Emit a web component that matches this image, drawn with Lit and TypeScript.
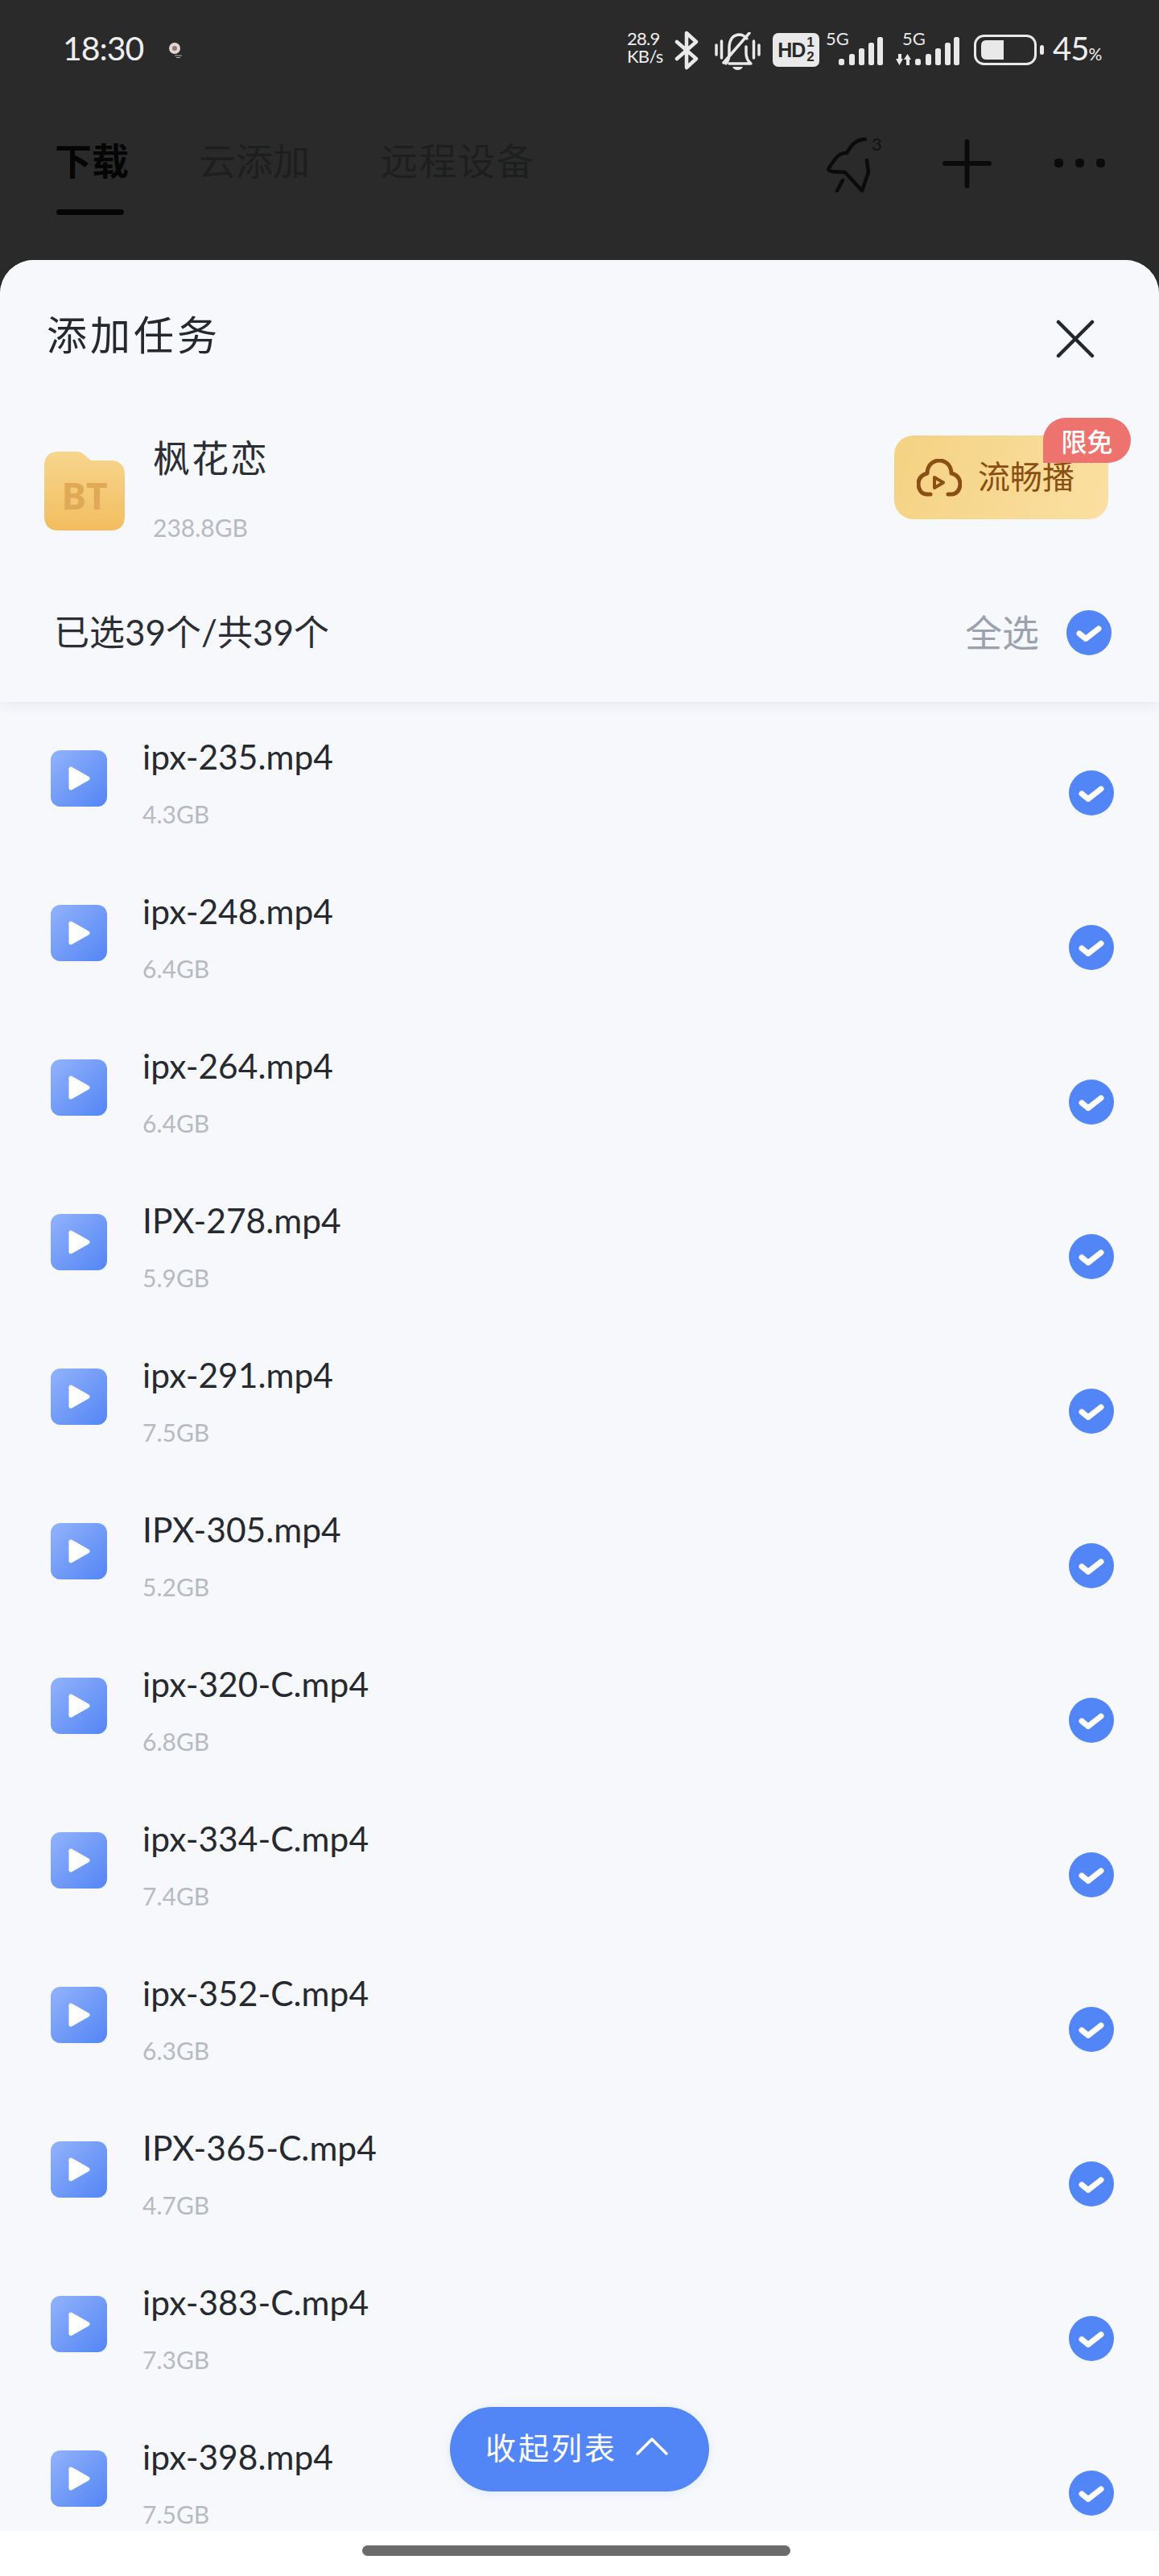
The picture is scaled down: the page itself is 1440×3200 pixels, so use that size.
import { LitElement, html, css, svg } from "lit";
import { customElement } from "lit/decorators.js";

const FILES: [string, string][] = [
  ["ipx-235.mp4", "4.3GB"],
  ["ipx-248.mp4", "6.4GB"],
  ["ipx-264.mp4", "6.4GB"],
  ["IPX-278.mp4", "5.9GB"],
  ["ipx-291.mp4", "7.5GB"],
  ["IPX-305.mp4", "5.2GB"],
  ["ipx-320-C.mp4", "6.8GB"],
  ["ipx-334-C.mp4", "7.4GB"],
  ["ipx-352-C.mp4", "6.3GB"],
  ["IPX-365-C.mp4", "4.7GB"],
  ["ipx-383-C.mp4", "7.3GB"],
  ["ipx-398.mp4", "7.5GB"],
];

const check = html`<svg class="check" viewBox="0 0 56 56" width="56" height="56">
  <circle cx="28" cy="28" r="28" fill="#5285f5"></circle>
  <path d="M16 29 L24 35.5 L40 23" fill="none" stroke="#fff" stroke-width="7" stroke-linecap="round" stroke-linejoin="round"></path>
</svg>`;

const bars = (xs: number[]) =>
  xs.map((x, i) => {
    const top = [33, 27, 20, 13, 6][i];
    return svg`<rect x=${x} y=${top} width="7" height=${41 - top} rx="2.5" fill="#e9e9e9"></rect>`;
  });

@customElement("app-root")
export class AppRoot extends LitElement {
  static styles = css`
    :host {
      display: block;
      width: 1440px;
      height: 3200px;
      background: #fff;
      overflow: hidden;
      font-family: "Lato", "Noto Sans CJK SC", sans-serif;
    }
    .top { height: 373px; margin-bottom: -50px; background: #2a2a2a; display: flex; flex-direction: column; }
    .status { height: 170px; display: flex; align-items: flex-start; padding: 0 76px 0 78px; box-sizing: border-box; color: #eee; flex: none; }
    .time { font-size: 41px; line-height: 40px; margin-top: 40px; width: 95px; letter-spacing: -1px; white-space: nowrap; }
    .flower { margin: 53px 0 0 36px; }
    .speed { margin: 37px 0 0 auto; font-size: 22px; line-height: 22px; width: 46px; white-space: nowrap; letter-spacing: -0.7px; }
    .bt { margin: 38px 0 0 13px; }
    .mute { margin: 40px 0 0 20px; }
    .hd { margin: 41px 0 0 15px; width: 58px; height: 42px; border-radius: 7px; background: #e9e9e9; color: #2a2a2a; display: flex; align-items: center; justify-content: center; font-family: "Liberation Sans", sans-serif; font-weight: 700; font-size: 25px; letter-spacing: -1px; }
    .frac { display: flex; flex-direction: column; font-size: 17px; line-height: 18px; margin-left: 2px; letter-spacing: 0; }
    .sig1 { margin: 34px 0 0 8px; }
    .sig2 { margin: 34px 0 0 16px; }
    .sigtext { font-size: 22px; fill: #e9e9e9; font-family: "Lato", sans-serif; }
    .bat { margin: 43px 0 0 18px; }
    .pct { margin: 40px 0 0 10px; font-size: 40px; line-height: 40px; white-space: nowrap; width: 56px; letter-spacing: -1px; }
    .pct small { font-size: 21px; letter-spacing: -1px; }

    .tabbar { display: flex; align-items: flex-start; flex: 1; }
    .tab { font-size: 46px; line-height: 60px; color: #1d1e1e; white-space: nowrap; }
    .tab.on { margin-left: 68px; color: #050505; font-weight: 700; display: flex; flex-direction: column; }
    .tab.on i { display: block; width: 84px; height: 7px; border-radius: 4px; background: #050505; margin: 30px 0 0 2px; }
    .tab.two { margin-left: 87px; }
    .tab.three { margin-left: 88px; letter-spacing: 2px; }
    .alert { margin: -6px 0 0 auto; }
    .plus { margin: 3px 0 0 76px; }
    .dots { margin: 27px 67px 0 78px; }

    .sheet { height: 2821px; background: #f6f8fc; border-radius: 42px 42px 0 0; position: relative; overflow: hidden; display: flex; flex-direction: column; }
    .head { flex: none; height: 549px; position: relative; z-index: 1; background: #f6f8fc; box-shadow: 0 5px 14px rgba(40, 50, 70, 0.07); display: flex; flex-direction: column; }
    .titlerow { height: 186px; display: flex; align-items: center; padding: 0 80px 0 58px; flex: none; }
    .title { font-size: 50px; line-height: 60px; letter-spacing: 4px; color: #25282d; }
    .close { margin: 10px 0 0 auto; }
    .folderrow { height: 191px; display: flex; align-items: flex-start; flex: none; }
    .folder { width: 100px; height: 98px; margin: 52px 0 0 55px; background: linear-gradient(180deg, #f7d68e, #f3bd5f); clip-path: path("M0 18 Q0 0 18 0 H40 Q46 0 50 4 L58 11 H82 Q100 11 100 29 V80 Q100 98 82 98 H18 Q0 98 0 80 Z"); display: flex; align-items: center; justify-content: center; padding-top: 10px; box-sizing: border-box; color: #dfa956; font: 700 46px "Noto Sans", sans-serif; }
    .ftext { margin: 30px 0 0 35px; display: flex; flex-direction: column; }
    .fname { font-size: 46px; line-height: 60px; color: #2b2e33; letter-spacing: 2px; }
    .fsize { font-size: 30px; line-height: 40px; margin-top: 36px; color: #b7bac2; }
    .stream { margin: 32px 63px 0 auto; width: 266px; height: 104px; border-radius: 24px; background: linear-gradient(110deg, #f4d283, #fbe0a2); display: flex; align-items: center; padding-left: 28px; box-sizing: border-box; position: relative; color: #8b4f14; font-size: 40px; gap: 20px; }
    .stream span { margin-bottom: 6px; }
    .badge { position: absolute; top: -22px; right: -28px; width: 109px; height: 56px; background: #ee726e; border-radius: 28px 28px 28px 0; color: #fff; font-size: 32px; font-weight: 500; display: flex; align-items: center; justify-content: center; }
    .selrow { flex: 1; display: flex; align-items: center; padding: 0 59px 0 67px; }
    .seltext { font-size: 44px; color: #2b2e33; margin-bottom: 6px; }
    .selall { margin: 0 34px 6px auto; font-size: 46px; color: #9aa3ad; }

    .list { flex: 1; overflow: hidden; padding-top: 20px; }
    .row { height: 192px; display: flex; align-items: flex-start; padding: 0 56px 0 63px; box-sizing: border-box; }
    .play { width: 70px; height: 70px; margin-top: 40px; flex: none; border-radius: 12px; background: linear-gradient(135deg, #93b3fb, #5285f5); display: flex; align-items: center; justify-content: center; }
    .ftxt { margin: 23px 0 0 44px; display: flex; flex-direction: column; }
    .name { font-size: 42.5px; line-height: 50px; color: #26292e; white-space: nowrap; }
    .size { font-size: 30px; line-height: 40px; margin-top: 26px; color: #b7bac2; }
    .row .check { margin: 65px 0 0 auto; }

    .fold { position: absolute; left: 559px; bottom: 49px; width: 322px; height: 105px; border-radius: 53px; background: #5285f5; box-shadow: 0 2px 12px rgba(82, 133, 245, 0.12); color: #fff; display: flex; align-items: center; padding: 0 0 8px 44px; box-sizing: border-box; gap: 23px; font-size: 38px; letter-spacing: 3px; white-space: nowrap; }
    .homebar { height: 56px; display: flex; justify-content: center; padding: 18px 8px 0 0; box-sizing: border-box; }
    .homebar i { display: block; width: 532px; height: 13px; border-radius: 7px; background: #6b6b6b; }
  `;

  render() {
    return html`
      <div class="top">
        <div class="status">
          <span class="time">18:30</span>
          <svg class="flower" width="18" height="19" viewBox="0 0 18 19">
            <circle cx="8" cy="7" r="7" fill="#e6d5d0"></circle>
            <circle cx="8" cy="7" r="3" fill="#8a7a78"></circle>
            <path d="M8 16 H17 M10 18.5 H15" stroke="#b9aaa6" stroke-width="1.2"></path>
          </svg>
          <div class="speed">28.9<br />KB/s</div>
          <svg class="bt" width="30" height="49" viewBox="0 0 30 49" fill="none" stroke="#e9e9e9" stroke-width="4.5" stroke-linejoin="round" stroke-linecap="round">
            <path d="M3 14 L27 35 L15 46 V3 L27 14 L3 35"></path>
          </svg>
          <svg class="mute" width="57" height="48" viewBox="0 0 57 48" fill="none" stroke="#e9e9e9" stroke-width="3.5" stroke-linecap="round" stroke-linejoin="round">
            <path d="M2 16 V28 M8.5 11 V32 M48.5 11 V32 M55 16 V28"></path>
            <path d="M14 39 Q18 34 18 26 V18 Q19 4 30 3 Q36 3 40 8"></path>
            <path d="M39 18 V26 Q39 34 45 39 H18"></path>
            <path d="M11 38 L43 1"></path>
            <path d="M22 43 H35 Q33 47 28.500 47 Q24 47 22 43 Z" fill="#e9e9e9" stroke="none"></path>
          </svg>
          <div class="hd">HD<span class="frac"><span>1</span><span>2</span></span></div>
          <svg class="sig1" width="71" height="47" viewBox="0 -6 71 47">
            <text class="sigtext" x="0" y="16">5G</text>
            ${bars([16, 29, 41, 53, 64])}
          </svg>
          <svg class="sig2" width="79" height="47" viewBox="0 -6 79 47">
            <text class="sigtext" x="8" y="16">5G</text>
            <path d="M0 33 H3 V27 H7 V33 H9 L4.500 41 Z M10 34 L14.500 27 L19 34 H17 V41 H13 V34 Z" fill="#e9e9e9"></path>
            ${bars([24, 37, 49, 61, 72])}
          </svg>
          <svg class="bat" width="88" height="38" viewBox="0 0 88 38">
            <rect x="1.500" y="1.500" width="75" height="35" rx="11" fill="none" stroke="#e9e9e9" stroke-width="3"></rect>
            <path d="M9 14 Q9 7 15 7 H37 V31 H15 Q9 31 9 24 Z" fill="#e9e9e9"></path>
            <rect x="82" y="13" width="5" height="12" rx="2.500" fill="#e9e9e9"></rect>
          </svg>
          <span class="pct">45<small>%</small></span>
        </div>
        <div class="tabbar">
          <div class="tab on">下载<i></i></div>
          <div class="tab two">云添加</div>
          <div class="tab three">远程设备</div>
          <svg class="alert" width="68" height="75" viewBox="0 -8 68 75" fill="none" stroke="#0b0b0b" stroke-width="4.500" stroke-linecap="round" stroke-linejoin="round">
            <path d="M48 1 C38 1 32 6 25 18 C15 18 11 24 2 38 C4 42 9 41 23 42 L44 65 L52 42 L50 27"></path>
            <path d="M20 52 L13 65"></path>
            <text x="56" y="15" font-size="22" fill="#111" stroke="none" font-family="Lato, sans-serif">3</text>
          </svg>
          <svg class="plus" width="61" height="61" viewBox="0 0 61 61" stroke="#0b0b0b" stroke-width="6" stroke-linecap="round">
            <path d="M3 30 H58 M30.500 3 V58"></path>
          </svg>
          <svg class="dots" width="63" height="11" viewBox="0 0 63 11" fill="#0b0b0b">
            <rect x="0" y="0" width="11" height="11" rx="4.500"></rect>
            <rect x="26" y="0" width="11" height="11" rx="4.500"></rect>
            <rect x="52" y="0" width="11" height="11" rx="4.500"></rect>
          </svg>
        </div>
      </div>

      <div class="sheet">
        <div class="head">
          <div class="titlerow">
            <div class="title">添加任务</div>
            <svg class="close" width="48" height="48" viewBox="0 0 48 48" stroke="#23262b" stroke-width="4.500" stroke-linecap="round">
              <path d="M3 3 L45 45 M45 3 L3 45"></path>
            </svg>
          </div>
          <div class="folderrow">
            <div class="folder">BT</div>
            <div class="ftext">
              <div class="fname">枫花恋</div>
              <div class="fsize">238.8GB</div>
            </div>
            <div class="stream">
              <svg width="56" height="47" viewBox="0 0 56 47" fill="none" stroke="#8b4f14" stroke-width="5" stroke-linecap="round" stroke-linejoin="round">
                <path d="M17 44 H13 C5 44 2 37 2 31 C2 23 8 19 13 18 C13 8 20 2 28 2 C36 2 43 8 43 18 C49 19 54 24 54 31 C54 38 50 44 43 44 H39"></path>
                <path d="M22 23 V36 L33 29.500 Z" stroke-width="4"></path>
              </svg>
              <span>流畅播</span>
              <div class="badge">限免</div>
            </div>
          </div>
          <div class="selrow">
            <div class="seltext">已选39个/共39个</div>
            <div class="selall">全选</div>
            ${check}
          </div>
        </div>
        <div class="list">
          ${FILES.map(
            ([n, s]) => html`<div class="row">
              <div class="play">
                <svg width="27" height="30" viewBox="0 0 27 30"><path d="M3 3 L24 15 L3 27 Z" fill="#fff" stroke="#fff" stroke-width="5" stroke-linejoin="round"></path></svg>
              </div>
              <div class="ftxt">
                <div class="name">${n}</div>
                <div class="size">${s}</div>
              </div>
              ${check}
            </div>`
          )}
        </div>
        <div class="fold">
          <span>收起列表</span>
          <svg width="40" height="22" viewBox="0 0 40 22" fill="none" stroke="#fff" stroke-width="3.500" stroke-linecap="round" stroke-linejoin="round">
            <path d="M2 20 L20 2 L38 20"></path>
          </svg>
        </div>
      </div>
      <div class="homebar"><i></i></div>
    `;
  }
}
